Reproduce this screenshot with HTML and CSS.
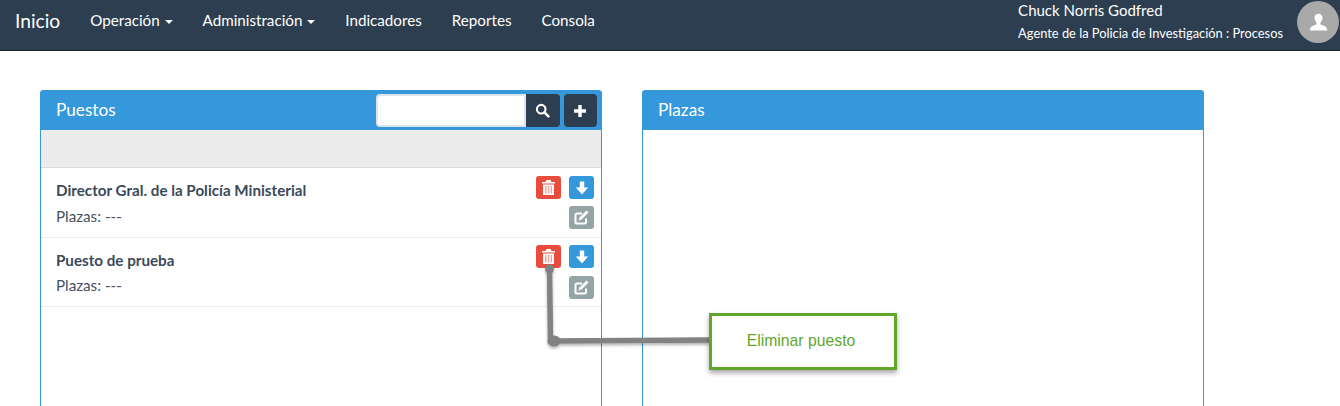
FILE: index.html
```html
<!DOCTYPE html>
<html lang="es">
<head>
  <meta charset="UTF-8" />
  <title>Puestos</title>
  <link rel="stylesheet" href="styles.css">
</head>
<body>
  <nav class="navbar">
    <a class="brand">Inicio</a>
    <ul class="nav-links">
      <li>Operación <span class="caret"></span></li>
      <li>Administración <span class="caret"></span></li>
      <li>Indicadores</li>
      <li>Reportes</li>
      <li>Consola</li>
    </ul>
    <div class="user">
      <div class="user-name">Chuck Norris Godfred</div>
      <div class="user-role">Agente de la Policia de Investigación : Procesos</div>
    </div>
    <div class="avatar">
      <svg width="19" height="19" viewBox="0 0 24 24"><path fill="#fff" d="M12 1c-3.200 0-5 2.400-5 5.400 0 2.200 1 4.300 2.500 5.500v2.600c-2.500 1-6.500 1.900-7.500 3.800-.6 1-.8 2.200-.8 3.700h21.600c0-1.500-.2-2.700-.8-3.700-1-1.900-5-2.800-7.500-3.800v-2.600c1.500-1.200 2.500-3.300 2.500-5.500C17 3.400 15.200 1 12 1z"/></svg>
    </div>
  </nav>

  <main class="content">
    <section class="panel panel-puestos">
      <header class="panel-heading">
        <h3>Puestos</h3>
        <div class="search">
          <input type="text" />
          <button class="btn-dark btn-search">
            <svg width="15" height="15" viewBox="0 0 14 14"><circle cx="5.800" cy="5.800" r="4" fill="none" stroke="#fff" stroke-width="2"/><path d="M8.800 8.800l3.700 3.700" stroke="#fff" stroke-width="2.400" stroke-linecap="round"/></svg>
          </button>
          <button class="btn-dark btn-add">
            <svg width="14" height="14" viewBox="0 0 14 14"><path d="M7 1v12M1 7h12" stroke="#fff" stroke-width="3.400"/></svg>
          </button>
        </div>
      </header>
      <div class="panel-toolbar"></div>
      <div class="item">
        <div class="item-text">
          <div class="item-title">Director Gral. de la Policía Ministerial</div>
          <div class="item-sub">Plazas: ---</div>
        </div>
        <div class="item-actions">
          <button class="icon-btn red">
            <svg width="13" height="15" viewBox="0 0 13 15"><path fill="#fff" d="M4.500 0h4l1 2H13v1.500H0V2h3.500zM1 4.500h11V15H1z"/><path fill="#f0a8a0" d="M3 6h1.500v7.500H3zM5.800 6h1.500v7.500H5.800zM8.500 6H10v7.500H8.500z"/></svg>
          </button>
          <button class="icon-btn blue">
            <svg width="14" height="14" viewBox="0 0 14 14"><path fill="#fff" d="M4.800 .5h4.400v6h4L7 13.500.8 6.500h4z"/></svg>
          </button>
          <button class="icon-btn grey">
            <svg width="15" height="15" viewBox="0 0 15 15"><path fill="none" stroke="#fff" stroke-width="2" d="M12 8.500V12a1.500 1.500 0 0 1-1.500 1.500H3A1.500 1.500 0 0 1 1.500 12V5A1.500 1.500 0 0 1 3 3.500h5"/><path fill="#fff" d="M12.500.5l2 2-7 7-3 1 1-3z"/></svg>
          </button>
        </div>
      </div>
      <div class="item item-short">
        <div class="item-text">
          <div class="item-title">Puesto de prueba</div>
          <div class="item-sub">Plazas: ---</div>
        </div>
        <div class="item-actions">
          <button class="icon-btn red">
            <svg width="13" height="15" viewBox="0 0 13 15"><path fill="#fff" d="M4.500 0h4l1 2H13v1.500H0V2h3.500zM1 4.500h11V15H1z"/><path fill="#f0a8a0" d="M3 6h1.500v7.500H3zM5.800 6h1.500v7.500H5.800zM8.500 6H10v7.500H8.500z"/></svg>
          </button>
          <button class="icon-btn blue">
            <svg width="14" height="14" viewBox="0 0 14 14"><path fill="#fff" d="M4.800 .5h4.400v6h4L7 13.500.8 6.500h4z"/></svg>
          </button>
          <button class="icon-btn grey">
            <svg width="15" height="15" viewBox="0 0 15 15"><path fill="none" stroke="#fff" stroke-width="2" d="M12 8.500V12a1.500 1.500 0 0 1-1.500 1.500H3A1.500 1.500 0 0 1 1.500 12V5A1.500 1.500 0 0 1 3 3.500h5"/><path fill="#fff" d="M12.500.5l2 2-7 7-3 1 1-3z"/></svg>
          </button>
        </div>
      </div>
    </section>

    <section class="panel panel-plazas">
      <header class="panel-heading">
        <h3>Plazas</h3>
      </header>
    </section>
  </main>

  <svg class="callout-line" width="1340" height="406" viewBox="0 0 1340 406">
    <defs>
      <filter id="line-shadow" x="-20%" y="-20%" width="140%" height="140%">
        <feDropShadow dx="0" dy="2" stdDeviation="1.500" flood-color="#000" flood-opacity="0.3"/>
      </filter>
    </defs>
    <g filter="url(#line-shadow)" fill="#828282">
      <path d="M549.500 269L550.500 341L710 340" fill="none" stroke="#828282" stroke-width="5.500"/>
      <circle cx="549.500" cy="269" r="4.500"/>
      <ellipse cx="554" cy="341" rx="6.500" ry="5.500"/>
    </g>
  </svg>
  <div class="callout">Eliminar puesto</div>
</body>
</html>
```

FILE: styles.css
```css
html, body {
  height: 406px;
  overflow: hidden;
}

body {
  margin: 0;
  padding: 0;
  font-family: Lato, "Noto Sans", sans-serif;
  font-size: 15.2px;
  color: #2c3e50;
  background-color: #fff;
}

.navbar {
  display: flex;
  align-items: flex-start;
  height: 50px;
  padding: 0 1px 0 15px;
  background-color: #2c3e50;
  border-bottom: 1px solid #1a2530;
  color: #fff;
}

.brand {
  margin-top: 9px;
  margin-right: 15px;
  font-size: 19.2px;
  line-height: 24px;
}

.nav-links {
  display: flex;
  gap: 30px;
  margin: 0;
  padding: 10px 0 0 15px;
  list-style: none;
  line-height: 20px;
}

.caret {
  display: inline-block;
  width: 0;
  height: 0;
  margin-left: 1px;
  vertical-align: middle;
  border-top: 4px solid #fff;
  border-left: 4px solid transparent;
  border-right: 4px solid transparent;
}

.user {
  margin-left: auto;
  margin-right: 14px;
}

.user-name {
  font-size: 15px;
  line-height: 20px;
}

.user-role {
  margin-top: 3px;
  font-size: 12.85px;
  line-height: 20px;
}

.avatar {
  display: flex;
  align-items: center;
  justify-content: center;
  width: 42px;
  height: 42px;
  margin-top: 1px;
  border-radius: 50%;
  background-color: #a9a9a9;
}

.content {
  display: flex;
  gap: 40px;
  padding: 39px 0 0 40px;
}

.panel {
  height: 316px;
  border: 1px solid #3498db;
  border-bottom: 0;
  border-radius: 4px 4px 0 0;
  background-color: #fff;
}

.panel-puestos {
  width: 560px;
}

.panel-plazas {
  width: 560px;
}

.panel-heading {
  display: flex;
  align-items: center;
  justify-content: space-between;
  height: 39px;
  margin: -1px -1px 0;
  padding: 1px 5px 0 16px;
  background-color: #3498db;
  border-radius: 4px 4px 0 0;
  color: #fff;
}

.panel-heading h3 {
  margin: -2px 0 0;
  font-size: 17.2px;
  font-weight: 400;
}

.search {
  display: flex;
  align-items: center;
}

.search input {
  box-sizing: border-box;
  width: 150px;
  height: 33px;
  padding: 0 8px;
  border: 2px solid #dce4ec;
  border-radius: 4px 0 0 4px;
  background-color: #fff;
}

.btn-dark {
  display: flex;
  align-items: center;
  justify-content: center;
  width: 34px;
  height: 33px;
  padding: 0;
  border: none;
  border-radius: 0 4px 4px 0;
  background-color: #2c3e50;
}

.btn-search {
  padding-right: 2px;
}

.btn-add {
  width: 33px;
  margin-left: 4px;
  padding-right: 2px;
  border-radius: 4px;
}

.panel-toolbar {
  height: 37px;
  background-color: #ececec;
  border-bottom: 1px solid #dcdcdc;
}

.item {
  display: flex;
  justify-content: space-between;
  box-sizing: border-box;
  height: 70px;
  padding: 8px 7px 0 15px;
  border-bottom: 1px solid #ececec;
}

.item-short {
  height: 69px;
  padding-top: 7px;
}

.item-text {
  padding-top: 4px;
}

.item-title {
  font-weight: 700;
  line-height: 20px;
  color: #3a4a5a;
}

.item-sub {
  margin-top: 6px;
  line-height: 20px;
  color: #44525f;
}

.item-short .item-text {
  padding-top: 5px;
}

.item-short .item-sub {
  margin-top: 5px;
}

.item-actions {
  display: grid;
  grid-template-columns: 25px 25px;
  grid-auto-rows: 23px;
  column-gap: 8px;
  row-gap: 7px;
}

.item-short .item-actions {
  row-gap: 8px;
}

.icon-btn {
  display: flex;
  align-items: center;
  justify-content: center;
  width: 25px;
  height: 23px;
  padding: 0;
  border: none;
  border-radius: 3px;
}

.red {
  background-color: #e74c3c;
}

.blue {
  background-color: #3498db;
}

.grey {
  grid-column: 2;
  background-color: #95a5a6;
}

.callout-line {
  position: absolute;
  top: 0;
  left: 0;
  pointer-events: none;
}

.callout {
  position: absolute;
  top: 313px;
  left: 709px;
  display: flex;
  align-items: center;
  justify-content: center;
  box-sizing: border-box;
  width: 188px;
  height: 57px;
  padding: 0 4px 2px 0;
  border: 3px solid #62a72c;
  background-color: #fff;
  box-shadow: 0 3px 5px rgba(0, 0, 0, 0.35);
  font-family: "Liberation Sans", Arial, sans-serif;
  font-size: 15.75px;
  color: #62a72c;
}
```
